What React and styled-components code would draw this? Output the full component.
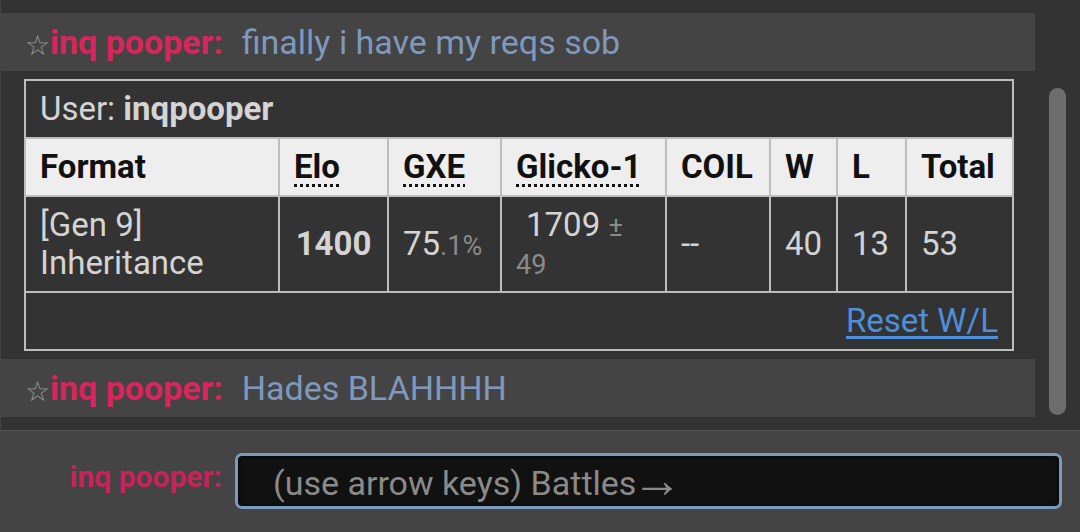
import React from 'react'
import styled, { createGlobalStyle } from 'styled-components'

const Global = createGlobalStyle`
  html, body { margin: 0; padding: 0; background: #333; }
  body { font-family: Roboto, "Noto Sans", sans-serif; overflow: hidden; }
`;

const stats = {
  user: 'inqpooper',
  format: ['[Gen 9]', 'Inheritance'],
  elo: 1400,
  gxe: ['75', '.1%'],
  glicko: ['1709', '49'],
  coil: '--',
  w: 40,
  l: 13,
};

export default function App() {
  return (
    <Page>
      <Global />
      <ChatArea>
        <Log>
          <ChatLine>
            <Star>☆</Star><Name>inq pooper:</Name>
            <Message>finally i have my reqs sob</Message>
          </ChatLine>
          <StatsBox>
            <StatsTable>
              <colgroup>
                <col style={{ width: 254 }} />
                <col style={{ width: 109 }} />
                <col style={{ width: 113 }} />
                <col style={{ width: 165 }} />
                <col style={{ width: 104 }} />
                <col style={{ width: 67 }} />
                <col style={{ width: 69 }} />
                <col />
              </colgroup>
              <tbody>
                <tr>
                  <Cell colSpan={8}>User: <strong>{stats.user}</strong></Cell>
                </tr>
                <tr>
                  <Head>Format</Head>
                  <Head><Abbr>Elo</Abbr></Head>
                  <Head><Abbr>GXE</Abbr></Head>
                  <Head><Abbr>Glicko-1</Abbr></Head>
                  <Head>COIL</Head>
                  <Head>W</Head>
                  <Head>L</Head>
                  <Head>Total</Head>
                </tr>
                <tr>
                  <Cell>{stats.format[0]}<br />{stats.format[1]}</Cell>
                  <Cell $center><strong>{stats.elo}</strong></Cell>
                  <Cell>{stats.gxe[0]}<Dim>{stats.gxe[1]}</Dim></Cell>
                  <Cell><Indent>{stats.glicko[0]}</Indent> <Dim>± {stats.glicko[1]}</Dim></Cell>
                  <Cell>{stats.coil}</Cell>
                  <Cell>{stats.w}</Cell>
                  <Cell>{stats.l}</Cell>
                  <Cell>{stats.w + stats.l}</Cell>
                </tr>
                <tr>
                  <Cell colSpan={8} $right><ResetLink href="#">Reset W/L</ResetLink></Cell>
                </tr>
              </tbody>
            </StatsTable>
          </StatsBox>
          <ChatLine>
            <Star>☆</Star><Name>inq pooper:</Name>
            <Message>Hades BLAHHHH</Message>
          </ChatLine>
        </Log>
        <ScrollTrack>
          <ScrollThumb />
        </ScrollTrack>
      </ChatArea>
      <ComposeBar>
        <ComposeName>inq pooper:</ComposeName>
        <InputBox>(use arrow keys) Battles<Arrow>→</Arrow></InputBox>
      </ComposeBar>
    </Page>
  );
}

const Page = styled.div`
  width: 1080px;
  height: 532px;
  display: flex;
  flex-direction: column;
  background: #333;
`;

const ChatArea = styled.div`
  height: 430px;
  display: flex;
  border-left: 1px solid #444;
  border-bottom: 1px solid #555;
`;

const Log = styled.div`
  flex: 1;
  display: flex;
  flex-direction: column;
  gap: 8px;
  padding-top: 13px;
`;

const ChatLine = styled.div`
  height: 58px;
  background: #444;
  display: flex;
  align-items: center;
  padding-left: 24px;
  font-size: 34px;
`;

const Star = styled.span`
  color: #9a9a9a;
  font-size: 28px;
  margin-top: 6px;
`;

const Name = styled.strong`
  color: #d9245e;
  margin-right: 19px;
`;

const Message = styled.span`
  color: #7f98bd;
`;

const StatsBox = styled.div`
  padding: 0 21px 0 23px;
`;

const StatsTable = styled.table`
  width: 100%;
  table-layout: fixed;
  border-collapse: collapse;
  border: 2px solid #bdbdbd;
  font-size: 33px;
  color: #d4d4d4;
  line-height: 38px;
  strong { font-weight: 700; }
`;

const Cell = styled.td`
  border: 2px solid #bdbdbd;
  padding: 9px 14px 9px;
  text-align: ${p => (p.$right ? 'right' : p.$center ? 'center' : 'left')};
  vertical-align: middle;
`;

const Head = styled.th`
  border: 2px solid #bdbdbd;
  background: #eee;
  color: #111;
  padding: 9px 14px 9px;
  text-align: left;
  font-weight: 700;
`;

const Abbr = styled.span`
  text-decoration: underline dotted;
  text-underline-offset: 6px;
  text-decoration-thickness: 3px;
`;

const Dim = styled.small`
  color: #8a8a8a;
  font-size: 27px;
  line-height: 1;
`;

const Indent = styled.span`
  padding-left: 10px;
`;

const ResetLink = styled.a`
  color: #4d8fdc;
  text-decoration: underline;
  text-underline-offset: 4px;
`;

const ScrollTrack = styled.div`
  width: 45px;
  padding: 88px 0 0 14px;
  box-sizing: border-box;
`;

const ScrollThumb = styled.div`
  width: 17px;
  height: 327px;
  border-radius: 9px;
  background: #6d6d6d;
`;

const ComposeBar = styled.div`
  flex: 1;
  background: #444;
  display: flex;
  align-items: center;
  padding-bottom: 2px;
`;

const ComposeName = styled.strong`
  width: 222px;
  text-align: right;
  color: #c8225a;
  font-size: 30px;
  margin-right: 13px;
  margin-top: -8px;
`;

const InputBox = styled.div`
  width: 827px;
  height: 56px;
  box-sizing: border-box;
  border: 3px solid #7a9bbb;
  border-radius: 7px;
  background: #111;
  box-shadow: inset 0 0 4px #000;
  color: #8a8a8a;
  font-size: 34px;
  display: flex;
  align-items: center;
  padding: 4px 0 0 35px;
`;

const Arrow = styled.span`
  font-size: 50px;
  line-height: 1;
  margin: -6px 0 0 -4px;
`;
